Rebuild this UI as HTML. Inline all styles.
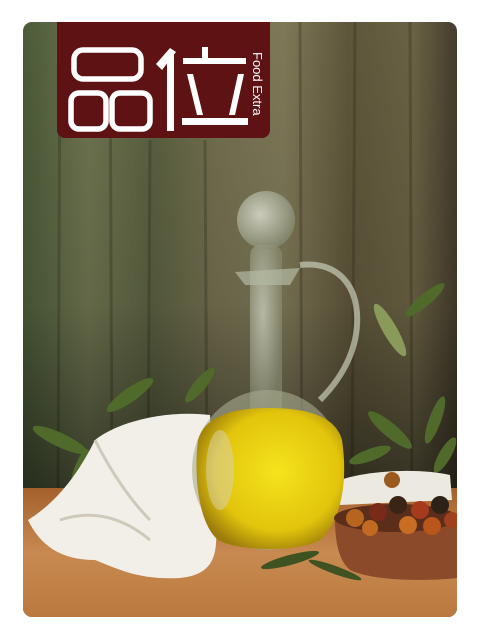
<!DOCTYPE html>
<html><head><meta charset="utf-8"><style>
html,body{margin:0;padding:0;background:#fff;width:480px;height:640px;overflow:hidden}
svg{display:block}
</style></head><body>
<svg width="480" height="640" viewBox="0 0 480 640" xmlns="http://www.w3.org/2000/svg">
<defs>
<clipPath id="c"><rect x="23" y="22" width="434" height="595" rx="9"/></clipPath>
<linearGradient id="wood" x1="0" y1="0" x2="1" y2="0">
<stop offset="0" stop-color="#4a5a38"/><stop offset="0.15" stop-color="#6e7450"/><stop offset="0.3" stop-color="#5a6040"/><stop offset="0.45" stop-color="#746f50"/><stop offset="0.6" stop-color="#7e7858"/><stop offset="0.75" stop-color="#5e563a"/><stop offset="0.9" stop-color="#6a6244"/><stop offset="1" stop-color="#443c2c"/>
</linearGradient>
<linearGradient id="woodv" x1="0" y1="0" x2="0" y2="1">
<stop offset="0" stop-color="#000" stop-opacity="0"/><stop offset="0.6" stop-color="#000" stop-opacity="0.1"/><stop offset="1" stop-color="#000" stop-opacity="0.5"/>
</linearGradient>
<linearGradient id="table" x1="0" y1="0" x2="0" y2="1">
<stop offset="0" stop-color="#a5602c"/><stop offset="0.5" stop-color="#c88a50"/><stop offset="1" stop-color="#ba783e"/>
</linearGradient>
<radialGradient id="oil" cx="0.55" cy="0.45" r="0.6">
<stop offset="0" stop-color="#f5e41c"/><stop offset="0.7" stop-color="#e2c40c"/><stop offset="1" stop-color="#9c7d0a"/>
</radialGradient>
<radialGradient id="glass" cx="0.4" cy="0.4" r="0.6">
<stop offset="0" stop-color="#e8ecdf"/><stop offset="1" stop-color="#8a8f75"/>
</radialGradient>
</defs>
<g clip-path="url(#c)">
<rect x="23" y="22" width="434" height="595" fill="url(#wood)"/>
<g opacity="0.3" stroke="#2e2a1c" stroke-width="3">
<line x1="60" y1="22" x2="58" y2="490"/><line x1="110" y1="22" x2="112" y2="490"/><line x1="150" y1="140" x2="148" y2="490"/><line x1="205" y1="140" x2="207" y2="490"/><line x1="300" y1="22" x2="302" y2="490"/><line x1="355" y1="22" x2="352" y2="490"/><line x1="410" y1="22" x2="412" y2="490"/>
</g>
<rect x="23" y="22" width="434" height="470" fill="url(#woodv)"/>
<rect x="23" y="488" width="434" height="130" fill="url(#table)"/>
<g fill="#4f6a2a">
<ellipse cx="130" cy="395" rx="28" ry="7" transform="rotate(-35 130 395)"/>
<ellipse cx="60" cy="440" rx="30" ry="7" transform="rotate(25 60 440)"/>
<ellipse cx="200" cy="385" rx="22" ry="6" transform="rotate(-50 200 385)"/>
<ellipse cx="80" cy="470" rx="22" ry="6" transform="rotate(-70 80 470)"/>
<ellipse cx="390" cy="330" rx="30" ry="7" transform="rotate(60 390 330)" fill="#8a9a5a"/>
<ellipse cx="425" cy="300" rx="25" ry="6" transform="rotate(-40 425 300)"/>
<ellipse cx="390" cy="430" rx="28" ry="7" transform="rotate(40 390 430)"/>
<ellipse cx="435" cy="420" rx="25" ry="6" transform="rotate(-70 435 420)"/>
<ellipse cx="370" cy="455" rx="22" ry="6" transform="rotate(-20 370 455)"/>
<ellipse cx="445" cy="455" rx="20" ry="6" transform="rotate(-60 445 455)"/>
</g>
<path d="M28 520 C60 500 80 470 95 440 C120 420 170 410 210 415 L215 520 C220 560 210 575 180 578 C140 580 120 570 95 560 C60 560 40 545 28 520 Z" fill="#f2efe8"/>
<path d="M95 440 C110 470 130 500 150 520 M60 520 C90 510 120 515 150 540" stroke="#cfc9bb" stroke-width="3" fill="none"/>
<path d="M340 480 C370 470 420 468 450 475 L452 500 L340 505 Z" fill="#ece9e0"/>
<path d="M300 265 C340 260 365 290 355 340 C348 370 330 390 320 400" stroke="#c9cdb8" stroke-width="6" fill="none" opacity="0.7"/>
<rect x="250" y="245" width="32" height="170" rx="10" fill="url(#glass)" opacity="0.6"/>
<path d="M235 272 L300 268 L290 285 L245 285 Z" fill="#b4b9a3" opacity="0.7"/>
<circle cx="266" cy="220" r="29" fill="url(#glass)" opacity="0.75"/>
<ellipse cx="268" cy="470" rx="76" ry="80" fill="#a9ac8f" opacity="0.6"/>
<path d="M198 440 C205 415 235 408 268 408 C305 408 335 415 342 440 C348 480 342 520 320 540 C300 552 240 552 218 540 C200 525 193 480 198 440 Z" fill="url(#oil)"/>
<ellipse cx="220" cy="470" rx="14" ry="40" fill="#d7d2b8" opacity="0.5"/>
<g fill="#3f5222"><ellipse cx="290" cy="560" rx="30" ry="5" transform="rotate(-15 290 560)"/><ellipse cx="335" cy="570" rx="28" ry="4" transform="rotate(20 335 570)"/></g>
<path d="M335 518 L457 515 L457 578 C420 582 370 580 350 570 C338 560 335 540 335 518 Z" fill="#8b4a2a"/>
<ellipse cx="396" cy="518" rx="62" ry="14" fill="#5a2e1a"/>
<g>
<circle cx="355" cy="518" r="9" fill="#b5651e"/><circle cx="378" cy="512" r="9" fill="#7a2a18"/><circle cx="398" cy="505" r="9" fill="#3a2416"/><circle cx="420" cy="510" r="9" fill="#a53b1c"/><circle cx="440" cy="505" r="9" fill="#2e2218"/><circle cx="370" cy="528" r="8" fill="#c26a22"/><circle cx="408" cy="525" r="9" fill="#c86d22"/><circle cx="432" cy="526" r="9" fill="#b8561c"/><circle cx="452" cy="520" r="8" fill="#a0401c"/><circle cx="392" cy="480" r="8" fill="#9a5a1e"/>
</g>
</g>
<path d="M57 22 H270 V130 A8 8 0 0 1 262 138 H65 A8 8 0 0 1 57 130 Z" fill="#5e1214"/>
<g fill="none" stroke="#fff" stroke-width="5.5">
<rect x="74" y="50" width="67" height="29" rx="9"/>
<rect x="71" y="93" width="35" height="36" rx="8"/>
<rect x="112" y="93" width="38" height="36" rx="8"/>
</g>
<g fill="#fff">
<polygon points="156,64 170,48 176,52 162,70"/>
<rect x="167" y="52" width="7" height="79"/>
<rect x="202" y="47" width="6" height="12"/>
<rect x="183" y="58" width="63" height="6"/>
<polygon points="187,74 193,74 203,115 197,115"/>
<polygon points="238,74 244,74 235,115 229,115"/>
<rect x="182" y="118" width="66" height="7"/>
</g>
<text x="0" y="0" transform="translate(253,52) rotate(90)" font-family="Liberation Sans, sans-serif" font-size="13" fill="#fff">Food Extra</text>
</svg>
</body></html>
